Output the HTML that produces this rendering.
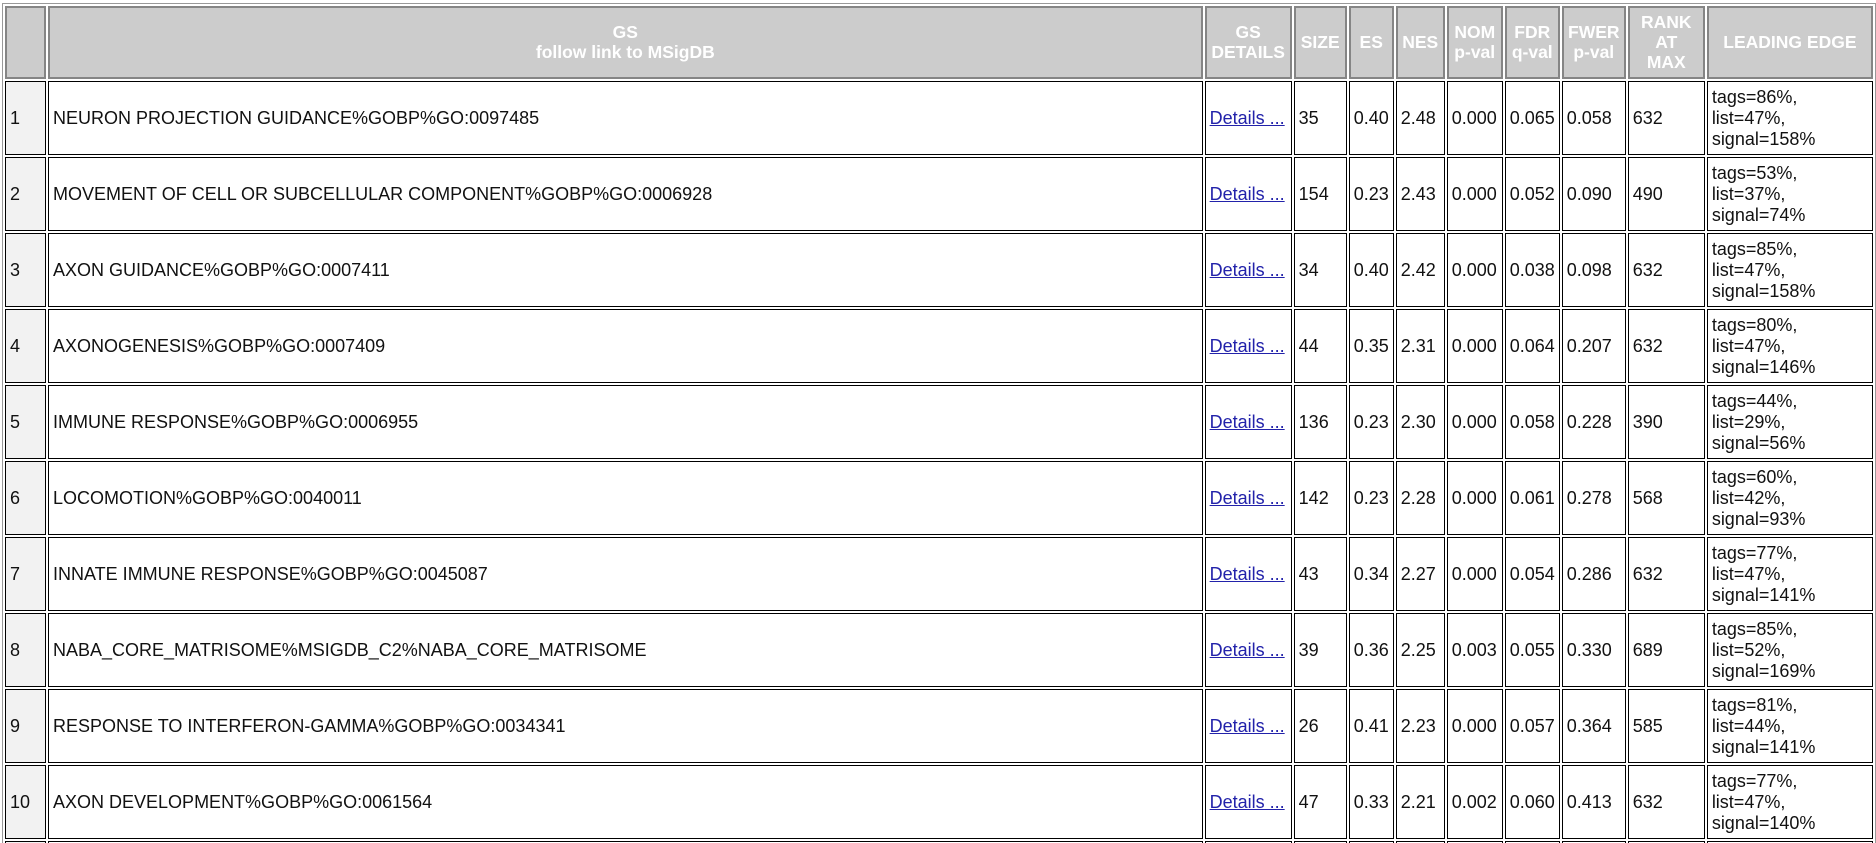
<!DOCTYPE html>
<html><head><meta charset="utf-8"><style>
html,body{height:843px;overflow:hidden;}
body{margin:0;background:#fff;font-family:"Liberation Sans",Arial,sans-serif;position:relative;}
table{position:absolute;left:2px;top:3px;border:1px solid #999;border-spacing:2px;table-layout:fixed;width:1874px;}
th{box-sizing:border-box;background:#ccc;color:#fff;font-weight:bold;font-size:17.5px;line-height:20px;border:2px solid #858585;height:73px;padding:0 0 2px 0;text-align:center;vertical-align:middle;overflow:visible;white-space:nowrap;}
td{box-sizing:border-box;border:1px solid #000;height:74px;padding:0 4px;font-size:18px;line-height:21px;color:#111;vertical-align:middle;white-space:nowrap;overflow:hidden;}
td.n{background:#f2f2f2;}
a{color:#2222aa;text-decoration:underline;}
</style></head><body>
<table>
<tr>
<th style="width:41px"></th>
<th style="width:1154px">GS<br>follow link to MSigDB</th>
<th style="width:87px">GS<br>DETAILS</th>
<th style="width:53px">SIZE</th>
<th style="width:45px">ES</th>
<th style="width:49px">NES</th>
<th style="width:56px">NOM<br>p-val</th>
<th style="width:55px">FDR<br>q-val</th>
<th style="width:64px">FWER<br>p-val</th>
<th style="width:77px">RANK<br>AT<br>MAX</th>
<th style="width:166px">LEADING EDGE</th>
</tr>
<tr><td class="n">1</td><td>NEURON PROJECTION GUIDANCE%GOBP%GO:0097485</td><td><a>Details ...</a></td><td>35</td><td>0.40</td><td>2.48</td><td>0.000</td><td>0.065</td><td>0.058</td><td>632</td><td>tags=86%,<br>list=47%,<br>signal=158%</td></tr>
<tr><td class="n">2</td><td>MOVEMENT OF CELL OR SUBCELLULAR COMPONENT%GOBP%GO:0006928</td><td><a>Details ...</a></td><td>154</td><td>0.23</td><td>2.43</td><td>0.000</td><td>0.052</td><td>0.090</td><td>490</td><td>tags=53%,<br>list=37%,<br>signal=74%</td></tr>
<tr><td class="n">3</td><td>AXON GUIDANCE%GOBP%GO:0007411</td><td><a>Details ...</a></td><td>34</td><td>0.40</td><td>2.42</td><td>0.000</td><td>0.038</td><td>0.098</td><td>632</td><td>tags=85%,<br>list=47%,<br>signal=158%</td></tr>
<tr><td class="n">4</td><td>AXONOGENESIS%GOBP%GO:0007409</td><td><a>Details ...</a></td><td>44</td><td>0.35</td><td>2.31</td><td>0.000</td><td>0.064</td><td>0.207</td><td>632</td><td>tags=80%,<br>list=47%,<br>signal=146%</td></tr>
<tr><td class="n">5</td><td>IMMUNE RESPONSE%GOBP%GO:0006955</td><td><a>Details ...</a></td><td>136</td><td>0.23</td><td>2.30</td><td>0.000</td><td>0.058</td><td>0.228</td><td>390</td><td>tags=44%,<br>list=29%,<br>signal=56%</td></tr>
<tr><td class="n">6</td><td>LOCOMOTION%GOBP%GO:0040011</td><td><a>Details ...</a></td><td>142</td><td>0.23</td><td>2.28</td><td>0.000</td><td>0.061</td><td>0.278</td><td>568</td><td>tags=60%,<br>list=42%,<br>signal=93%</td></tr>
<tr><td class="n">7</td><td>INNATE IMMUNE RESPONSE%GOBP%GO:0045087</td><td><a>Details ...</a></td><td>43</td><td>0.34</td><td>2.27</td><td>0.000</td><td>0.054</td><td>0.286</td><td>632</td><td>tags=77%,<br>list=47%,<br>signal=141%</td></tr>
<tr><td class="n">8</td><td>NABA_CORE_MATRISOME%MSIGDB_C2%NABA_CORE_MATRISOME</td><td><a>Details ...</a></td><td>39</td><td>0.36</td><td>2.25</td><td>0.003</td><td>0.055</td><td>0.330</td><td>689</td><td>tags=85%,<br>list=52%,<br>signal=169%</td></tr>
<tr><td class="n">9</td><td>RESPONSE TO INTERFERON-GAMMA%GOBP%GO:0034341</td><td><a>Details ...</a></td><td>26</td><td>0.41</td><td>2.23</td><td>0.000</td><td>0.057</td><td>0.364</td><td>585</td><td>tags=81%,<br>list=44%,<br>signal=141%</td></tr>
<tr><td class="n">10</td><td>AXON DEVELOPMENT%GOBP%GO:0061564</td><td><a>Details ...</a></td><td>47</td><td>0.33</td><td>2.21</td><td>0.002</td><td>0.060</td><td>0.413</td><td>632</td><td>tags=77%,<br>list=47%,<br>signal=140%</td></tr>
<tr><td class="n">11</td><td></td><td></td><td></td><td></td><td></td><td></td><td></td><td></td><td></td><td></td></tr>
</table>
</body></html>
